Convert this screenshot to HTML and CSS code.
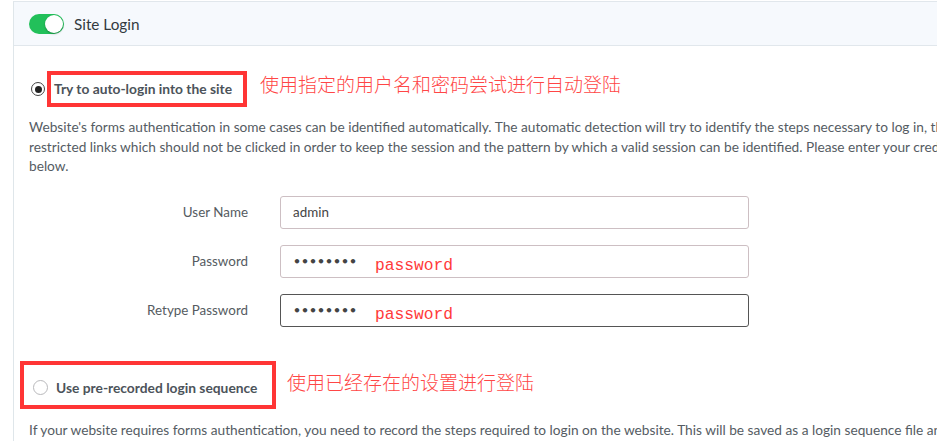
FILE: index.html
```html
<!DOCTYPE html>
<html>
<head>
<meta charset="utf-8">
<link rel="stylesheet" href="styles.css">
</head>
<body>
<div class="panel">
  <div class="panel-head">
    <span class="toggle"><span class="knob"></span></span>
    <span class="head-title">Site Login</span>
  </div>
  <div class="panel-body">
    <div class="option first">
      <span class="radio checked"></span>
      <span class="opt-label boxed box1">Try to auto-login into the site</span>
      <span class="note">使用指定的用户名和密码尝试进行自动登陆</span>
    </div>
    <p class="desc">Website's forms authentication in some cases can be identified automatically. The automatic detection will try to identify the steps necessary to log in, the restricted links which should not be clicked in order to keep the session and the pattern by which a valid session can be identified. Please enter your credentials below.</p>
    <div class="form">
      <label class="lbl">User Name</label>
      <div class="input"><span class="val">admin</span></div>
      <label class="lbl">Password</label>
      <div class="input"><span class="dots">••••••••</span><span class="pw">password</span></div>
      <label class="lbl">Retype Password</label>
      <div class="input focus"><span class="dots">••••••••</span><span class="pw">password</span></div>
    </div>
    <div class="option second">
      <div class="box2">
        <span class="radio"></span>
        <span class="opt-label">Use pre-recorded login sequence</span>
      </div>
      <span class="note note2">使用已经存在的设置进行登陆</span>
    </div>
    <p class="desc desc2">If your website requires forms authentication, you need to record the steps required to login on the website. This will be saved as a login sequence file and used during the scan.</p>
  </div>
</div>
</body>
</html>
```

FILE: styles.css
```css
html, body {
  margin: 0;
  padding: 0;
  background: #ffffff;
  overflow: hidden;
}
body {
  font-family: "Lato", "Liberation Sans", sans-serif;
  color: #555c63;
  width: 937px;
  height: 441px;
}
.panel {
  margin: 1px 0 0 13px;
  border-left: 1px solid #dfe6ea;
  border-top: 1px solid #e1e7ec;
  height: 460px;
  width: 1200px;
}
.panel-head {
  display: flex;
  align-items: center;
  height: 43px;
  background: #f6f9fd;
  border-bottom: 1px solid #e1e7ec;
  padding-left: 15px;
}
.toggle {
  position: relative;
  width: 35px;
  height: 20px;
  border-radius: 10px;
  background: #22c05a;
  display: inline-block;
}
.knob {
  position: absolute;
  right: 1px;
  top: 1px;
  width: 18px;
  height: 18px;
  border-radius: 50%;
  background: #fff;
  box-shadow: 0 1px 2px rgba(0,0,0,0.3);
}
.head-title {
  margin-left: 10px;
  font-size: 15.3px;
  color: #333a40;
}
.panel-body {
  padding-left: 15px;
}
.option {
  display: flex;
  align-items: center;
}
.option.first {
  margin-top: 25px;
  height: 36px;
}
.radio {
  width: 13px;
  height: 13px;
  border-radius: 50%;
  border: 1px solid #b9b9bc;
  box-sizing: content-box;
  display: inline-block;
  margin-left: 2px;
  position: relative;
  background: #fff;
}
.radio.checked {
  border: 1.5px solid #444;
  width: 12px;
  height: 12px;
}
.radio.checked::after {
  content: "";
  position: absolute;
  left: 2.5px;
  top: 2.5px;
  width: 7px;
  height: 7px;
  border-radius: 50%;
  background: #222;
}
.opt-label {
  font-weight: bold;
  font-size: 13.8px;
  color: #4c535a;
}
.box1 {
  margin-left: 2px;
  border: 4px solid #ff3535;
  padding: 0 11px 0 3px;
  height: 28px;
  line-height: 28px;
}
.note {
  font-family: "Noto Sans CJK SC", sans-serif;
  font-size: 19px;
  font-weight: 300;
  color: #ff4646;
  margin-left: 13px;
  margin-top: -11px;
}
.desc {
  margin: 10px 0 0 0;
  font-size: 13.7px;
  line-height: 19.6px;
  width: 975px;
}
.form {
  display: grid;
  grid-template-columns: 219px 469px;
  column-gap: 32px;
  row-gap: 16px;
  margin-top: 20px;
  align-items: center;
}
.lbl {
  text-align: right;
  font-size: 13.4px;
  color: #555b61;
}
.input {
  height: 33px;
  box-sizing: border-box;
  border: 1px solid #cdbfc3;
  border-radius: 3px;
  display: flex;
  align-items: center;
  padding-left: 12px;
  font-size: 13.4px;
  color: #444;
}
.input.focus {
  border-color: #555;
}
.dots {
  font-size: 12.5px;
  font-weight: bold;
  color: #444;
  font-family: "DejaVu Sans", sans-serif;
}
.pw {
  font-family: "Liberation Mono", monospace;
  font-size: 16.3px;
  color: #ff3a3a;
  margin-left: 18px;
  margin-top: 8px;
}
.option.second {
  margin-top: 34px;
  margin-left: -9px;
  align-items: flex-start;
}
.box2 {
  display: flex;
  align-items: center;
  border: 4px solid #ff3535;
  width: 256px;
  height: 48px;
  box-sizing: border-box;
  padding-left: 7px;
  gap: 8px;
  padding-top: 5px;
}
.note2 {
  margin-left: 11px;
  margin-top: 7px;
}
.desc2 {
  margin-top: 11px;
  white-space: nowrap;
}
```
